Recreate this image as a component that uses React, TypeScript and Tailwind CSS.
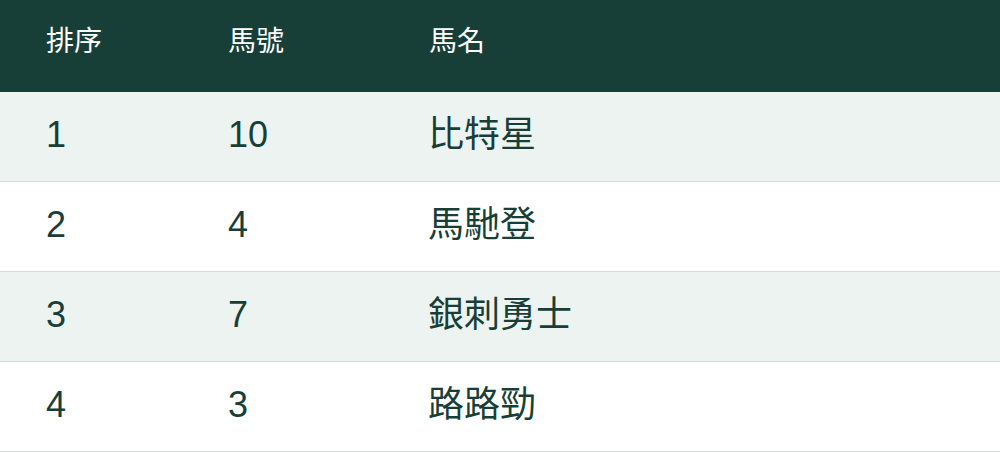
import React from 'react';

const rows = [
  { rank: '1', no: '10', name: '比特星' },
  { rank: '2', no: '4', name: '馬馳登' },
  { rank: '3', no: '7', name: '銀刺勇士' },
  { rank: '4', no: '3', name: '路路勁' },
];

const font = { fontFamily: '"Liberation Sans", "Noto Sans CJK TC", sans-serif' };

export default function App() {
  return (
    <div className="w-[1000px] h-[452px] bg-white" style={font}>
      {/* Header */}
      <div className="flex h-[92px] items-center pb-[8px] bg-[#173f37] text-white text-[28px] leading-none">
        <div className="w-[182px] pl-[46px]">排序</div>
        <div className="w-[202px] pl-[46px]">馬號</div>
        <div className="flex-1 pl-[45px]">馬名</div>
      </div>

      {/* Rows */}
      {rows.map((r, i) => (
        <div
          key={r.rank}
          className={
            'flex h-[90px] items-center pb-[4px] border-b border-[#d3ddda] text-[#173f37] text-[36px] leading-none ' +
            (i % 2 === 0 ? 'bg-[#edf3f1]' : 'bg-white')
          }
        >
          <div className="w-[182px] pl-[46px]">{r.rank}</div>
          <div className="w-[202px] pl-[46px]">{r.no}</div>
          <div className="flex-1 pl-[44px]">{r.name}</div>
        </div>
      ))}
    </div>
  );
}
